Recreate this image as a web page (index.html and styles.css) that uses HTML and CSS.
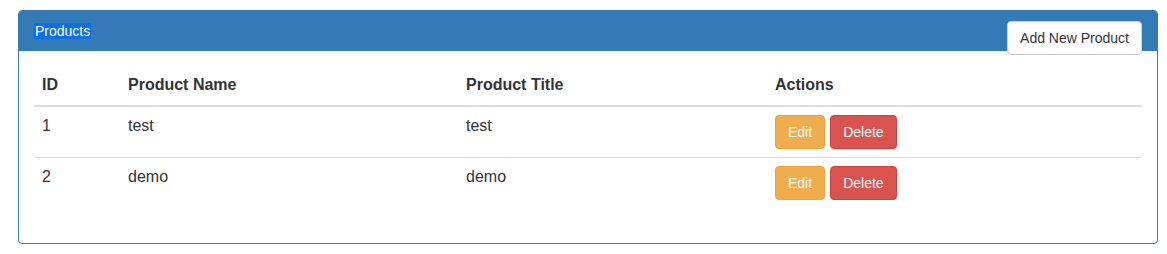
FILE: index.html
```html
<!DOCTYPE html>
<html>
<head>
<meta charset="utf-8">
<link rel="stylesheet" href="styles.css">
</head>
<body>
<div class="page">
  <div class="panel">
    <div class="panel-heading">
      <span class="title"><span class="sel">Products</span></span>
      <button class="btn btn-default add">Add New Product</button>
    </div>
    <div class="panel-body">
      <table class="table">
        <thead>
          <tr>
            <th class="c-id">ID</th>
            <th class="c-name">Product Name</th>
            <th class="c-title">Product Title</th>
            <th>Actions</th>
          </tr>
        </thead>
        <tbody>
          <tr>
            <td>1</td>
            <td>test</td>
            <td>test</td>
            <td class="actions"><button class="btn btn-warning">Edit</button><button class="btn btn-danger">Delete</button></td>
          </tr>
          <tr>
            <td>2</td>
            <td>demo</td>
            <td>demo</td>
            <td class="actions"><button class="btn btn-warning">Edit</button><button class="btn btn-danger">Delete</button></td>
          </tr>
        </tbody>
      </table>
    </div>
  </div>
</div>
</body>
</html>
```

FILE: styles.css
```css
* { box-sizing: border-box; }
html, body { margin: 0; padding: 0; background: #fff; }
body {
  font-family: "Liberation Sans", Arial, Helvetica, sans-serif;
  font-size: 14px;
  line-height: 1.42857;
  color: #333;
}
.page { padding: 10px 9px 0 18px; }
.panel {
  width: 1140px;
  border: 1px solid #337ab7;
  border-radius: 4px;
  background: #fff;
}
.panel-heading {
  background: #337ab7;
  color: #fff;
  padding: 10px 15px;
  height: 40px;
  display: flex;
  justify-content: space-between;
  align-items: flex-start;
  border-radius: 3px 3px 0 0;
}
.title { line-height: 20px; font-size: 14px; }
.sel { background: #0b6fe6; color: #fff; padding: 0 1px; }
.panel-body { padding: 15px; }
.btn {
  display: inline-block;
  font-family: inherit;
  font-size: 14px;
  line-height: 20px;
  padding: 6px 12px;
  border: 1px solid transparent;
  border-radius: 4px;
  cursor: pointer;
  height: 34px;
}
.btn-default { background: #fff; border-color: #ccc; color: #333; }
.add { position: relative; z-index: 1; flex-shrink: 0; }
.btn-warning { background: #f0ad4e; border-color: #eea236; color: #fff; }
.btn-danger { background: #d9534f; border-color: #d43f3a; color: #fff; margin-left: 5px; }
.table {
  width: 100%;
  border-collapse: collapse;
  border-spacing: 0;
  margin-bottom: 20px;
  font-size: 16px;
}
.table th, .table td {
  padding: 8px;
  text-align: left;
  vertical-align: top;
  line-height: 1.42857;
}
.table th {
  font-weight: bold;
  vertical-align: bottom;
  border-bottom: 2px solid #ddd;
}
.table tbody tr + tr td { border-top: 1px solid #ddd; }
.c-id { width: 86px; }
.c-name { width: 338px; }
.c-title { width: 309px; }
.actions { white-space: nowrap; }
```
